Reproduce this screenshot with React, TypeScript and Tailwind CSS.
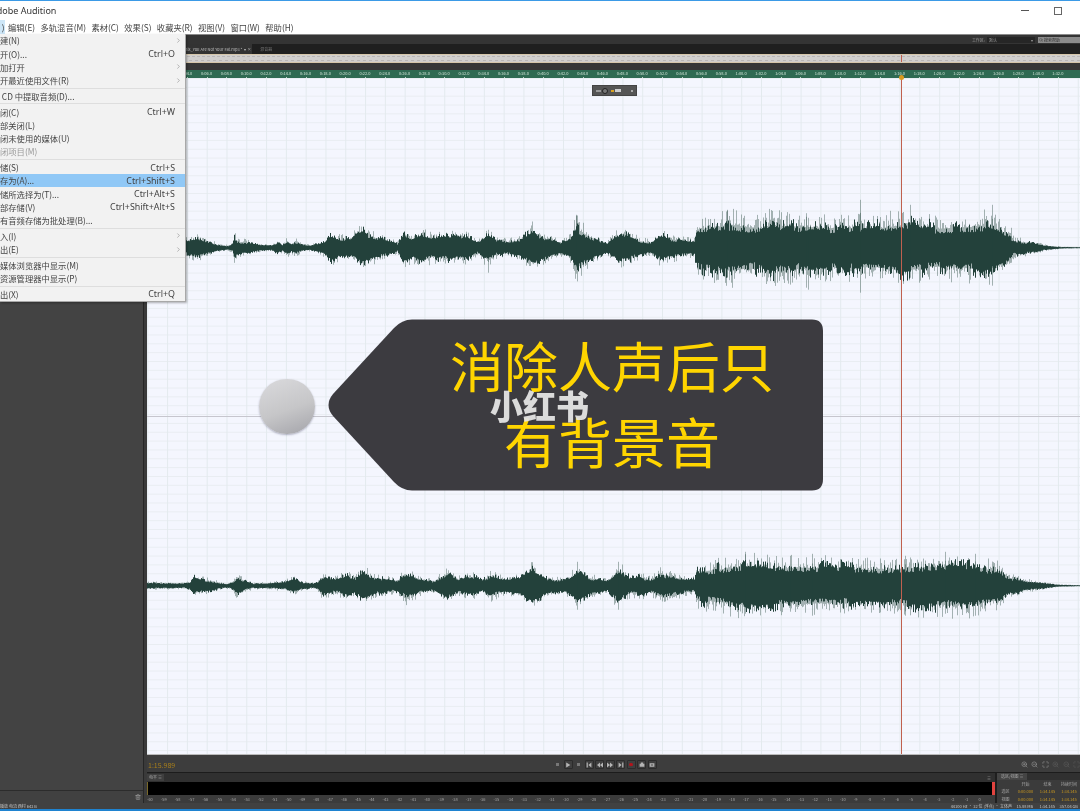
import React from "react";
import { ChevronRight, Trash2, ZoomIn, ZoomOut, Maximize, Search } from "lucide-react";

type P = [number, number];

const top: P[] = [[147,6],[165,9],[186,9],[197,13],[205,9],[217,4],[227,2.5],[232,4],[234,13],[238,8],[246,7],[260,3.5],[272,3],[277,7],[282,4],[287,9],[291,5],[295,8],[302,4],[310,3],[317,5],[325,8],[330,16],[338,11],[350,11],[362,20],[373,14],[385,10],[397,5],[403,19],[412,12],[420,17],[432,13],[447,15],[458,13],[467,15],[477,6],[488,18],[496,9],[507,8],[520,10],[533,22],[545,13],[560,7],[570,12],[576,28],[587,17],[600,9],[607,6],[617,16],[628,16],[640,9],[650,7],[660,15],[680,10],[694,8],[697,26],[715,29],[730,33],[760,27],[770,32],[800,30],[830,28],[860,28],[880,28],[905,33],[930,27],[960,28],[985,32],[1000,25],[1008,18],[1012,10],[1027,7],[1047,2.5],[1060,1],[1080,.5]];
const bottom: P[] = [[148,3.5],[170,3.5],[183,2.5],[190,4],[193,11],[200,8],[212,6],[220,3.5],[228,2.5],[232,5],[237,12],[245,6],[253,3],[273,3.5],[285,5],[293,9],[303,4],[313,3],[318,5],[320,11],[335,9],[347,12],[355,9],[362,17],[375,10],[397,7],[405,16],[420,9],[433,6],[447,17],[458,9],[473,12],[482,7],[490,14],[503,8],[520,10],[532,20],[545,10],[560,7],[570,10],[577,20],[590,10],[607,6],[618,21],[630,10],[640,12],[650,8],[660,16],[680,10],[694,8],[697,20],[720,23],[745,28],[775,24],[800,26],[840,24],[880,22],[910,25],[945,27],[975,26],[1000,20],[1010,10],[1027,6],[1047,2.5],[1060,1],[1080,.5]];

function env(pts: P[], x: number) {
  for (let i = 1; i < pts.length; i++) {
    if (x <= pts[i][0]) {
      const [x0, y0] = pts[i - 1];
      const [x1, y1] = pts[i];
      return y0 + ((y1 - y0) * (x - x0)) / (x1 - x0);
    }
  }
  return 0.5;
}

function rng(seed: number) {
  let s = seed;
  return () => {
    s = (s * 1664525 + 1013904223) >>> 0;
    return s / 4294967296;
  };
}

function wave(pts: P[], center: number, seed: number, spikes: [number, number, number][]) {
  const r = rng(seed);
  let body = "";
  let tips = "";
  let slowU = 0.75;
  let slowD = 0.75;
  for (let x = 147; x < 1080; x += 1) {
    const a = env(pts, x);
    if (r() < 0.15) slowU = 0.6 + 0.3 * r();
    if (r() < 0.15) slowD = 0.6 + 0.3 * r();
    const ru = r();
    const rd = r();
    const u = a * slowU * (0.85 + 0.4 * ru * ru);
    const d = a * slowD * (0.85 + 0.4 * rd * rd);
    const px = (x - 147 + 0.5).toFixed(1);
    body += `M${px} ${(center - u).toFixed(1)}V${(center + d).toFixed(1)}`;
    const k1 = r();
    const k2 = r();
    const tu = a * (0.7 + 0.55 * k1 * k1 * k1);
    const td = a * (0.7 + 0.55 * k2 * k2 * k2);
    tips += `M${px} ${(center - tu).toFixed(1)}V${(center + td).toFixed(1)}`;
  }
  for (const [x, up, dn] of spikes) {
    tips += `M${x - 147 + 0.5} ${center - up}V${center + dn}`;
  }
  return { body, tips };
}

const w1 = wave(top, 170, 11, [[860,48,45],[910,43,30],[992,43,38],[806,31,40],[808,30,42],[727,38,30],[1011,20,15],[576,32,26],[488,18,25]]);
const w2 = wave(bottom, 169, 29, [[745,34,28],[790,30,26],[812,32,30],[905,30,30],[945,34,28],[975,32,30],[618,24,24],[577,24,24]]);

function Channel({ w }: { w: { body: string; tips: string } }) {
  return (
    <div className="flex-1 min-h-0">
      <svg className="block w-full h-full" viewBox="0 0 933 338" preserveAspectRatio="none">
        <path d={w.tips} stroke="#2a4a42" strokeWidth="0.8" strokeOpacity="0.5" fill="none" />
        <path d={w.body} stroke="#22403a" strokeWidth="1" fill="none" />
      </svg>
    </div>
  );
}

const cjk = "font-['Noto_Sans_CJK_SC','Noto_Sans',sans-serif]";

type Row = { t?: string; k?: string; sub?: boolean; dim?: boolean; hi?: boolean; sep?: boolean };
const rows: Row[] = [
  { t: "新建(N)", sub: true },
  { t: "打开(O)...", k: "Ctrl+O" },
  { t: "追加打开", sub: true },
  { t: "打开最近使用文件(R)", sub: true },
  { sep: true },
  { t: "从 CD 中提取音频(D)..." },
  { sep: true },
  { t: "关闭(C)", k: "Ctrl+W" },
  { t: "全部关闭(L)" },
  { t: "关闭未使用的媒体(U)" },
  { t: "关闭项目(M)", dim: true },
  { sep: true },
  { t: "存储(S)", k: "Ctrl+S" },
  { t: "另存为(A)...", k: "Ctrl+Shift+S", hi: true },
  { t: "存储所选择为(T)...", k: "Ctrl+Alt+S" },
  { t: "全部存储(V)", k: "Ctrl+Shift+Alt+S" },
  { t: "所有音频存储为批处理(B)..." },
  { sep: true },
  { t: "导入(I)", sub: true },
  { t: "导出(E)", sub: true },
  { sep: true },
  { t: "在媒体浏览器中显示(M)" },
  { t: "在资源管理器中显示(P)" },
  { sep: true },
  { t: "退出(X)", k: "Ctrl+Q" },
];

const menus = ["编辑(E)", "多轨混音(M)", "素材(C)", "效果(S)", "收藏夹(R)", "视图(V)", "窗口(W)", "帮助(H)"];

function fmt(t: number) {
  const m = Math.floor(t / 60);
  const s = t % 60;
  return `${m}:${s < 10 ? "0" : ""}${s}.0`;
}
const ticks = Array.from({ length: 46 }, (_, i) => (i + 1) * 2);
const dbs = Array.from({ length: 61 }, (_, i) => i - 60);

function Btn({ children }: { children: React.ReactNode }) {
  return <div className="w-[9px] h-[9px] rounded-[1px] bg-[#3f3f3f] border border-[#2c2c2c] flex items-center justify-center">{children}</div>;
}
function Glyph({ d }: { d: string }) {
  return (
    <svg width="6" height="6" viewBox="0 0 10 10" fill="#b5b5b5">
      <path d={d} />
    </svg>
  );
}

export default function App() {
  return (
    <div className={`relative w-[1080px] h-[811px] overflow-hidden bg-[#2a2a2a] flex flex-col blur-[0.4px] ${cjk}`}>
      {/* title bar */}
      <div className="h-[1px] bg-[#3b9ae6] shrink-0" />
      <div className="h-[19px] bg-white shrink-0 flex items-center justify-between">
        <span className="-ml-[9px] text-[9px] text-[#333] font-['Noto_Sans',sans-serif]">Adobe Audition</span>
        <div className="flex items-center">
          <div className="w-[8px] h-[1px] bg-[#555] mr-[25px]" />
          <div className="w-[8px] h-[8px] border border-[#666] mr-[18px]" />
        </div>
      </div>
      {/* menu bar */}
      <div className="h-[14px] bg-white shrink-0 flex items-center text-[8.3px] text-[#444] whitespace-nowrap">
        <span className="h-full w-[4.5px] bg-[#cde6f7] flex items-center justify-end overflow-hidden mr-[3.5px]">)</span>
        <div className="flex gap-[5.4px]">
          {menus.map((m) => (
            <span key={m}>{m}</span>
          ))}
        </div>
      </div>
      {/* workspace bar */}
      <div className="h-[10px] bg-[#343434] border-t border-[#8a8a8a] shrink-0 flex items-center justify-end text-[4px] text-[#9a9a9a]">
        <span className="mr-[2px]">工作区:</span>
        <div className="w-[48px] h-[6px] bg-[#262626] flex items-center justify-between px-[2px] mr-[3px]">
          <span>默认</span>
          <span>▾</span>
        </div>
        <div className="w-[42px] h-[6px] bg-[#8b8b8b] flex items-center px-[1px] text-[#333] gap-[1px]">
          <Search size={4} />
          <span>搜索帮助</span>
        </div>
      </div>

      <div className="flex-1 min-h-0 flex">
        {/* left panels */}
        <div className="w-[143px] shrink-0 flex flex-col mt-[1px]">
          <div className="h-[10px] bg-[#222]" />
          <div className="flex-1 min-h-0 bg-[#434343] border-b border-[#2c2c2c]" />
          <div className="h-[12px] bg-[#414141] flex items-center justify-end pr-[2px]">
            <Trash2 size={6} className="text-[#aaa]" />
          </div>
        </div>
        <div className="w-[4px] shrink-0 bg-[#3a3a3a] border-l border-[#262626]" />

        {/* editor */}
        <div className="flex-1 min-w-0 flex flex-col">
          {/* tabs */}
          <div className="h-[10px] bg-[#1f1f1f] shrink-0 flex items-center text-[4px] text-[#bdbdbd] whitespace-nowrap overflow-hidden">
            <div className="h-full flex items-center bg-[#333] pl-[18px] pr-[1px] gap-[2px]">
              <span>编辑器: Remix_You Are Not Your Fat.mp3 *</span>
              <span>▾ ×</span>
            </div>
            <span className="ml-[8px] text-[#777]">混音器</span>
          </div>
          {/* overview */}
          <div className="h-[9px] shrink-0 bg-[#d0cecd] border-t border-b border-[#d6c6aa] relative">
            <div className="mt-[1px] h-[1px] bg-[repeating-linear-gradient(to_right,#b9b6b5_0_3px,transparent_3px_5px)]" />
            <div className="mt-[3px] h-[1px] bg-[repeating-linear-gradient(to_right,#b9b6b5_0_3px,transparent_3px_6px)]" />
            <div className="absolute left-[754px] top-0 bottom-0 w-[1px] bg-[#c0604f]" />
          </div>
          <div className="h-[7px] shrink-0 bg-[#363636]" />
          {/* ruler */}
          <div className="h-[8px] shrink-0 bg-[#2f6a52] flex text-[4px] leading-[7px] text-[#cfe3d6] overflow-hidden whitespace-nowrap">
            <div className="flex ml-[10.1px]">
              {ticks.map((t) => (
                <span key={t} className="relative w-[19.8px] shrink-0 text-center">
                  {fmt(t)}
                  <span className="absolute left-[9.9px] bottom-0 w-[1px] h-[1.5px] bg-[#bcd4c6]" />
                </span>
              ))}
            </div>
          </div>
          {/* canvas */}
          <div className="relative flex-1 min-h-0 flex flex-col bg-[#f4f6fe] bg-[linear-gradient(to_right,#e3eaee_1px,transparent_1px),linear-gradient(to_bottom,#e9edf2_1px,transparent_1px)] bg-[size:19.8px_8.85px] bg-[position:0.3px_0px] border-b border-[#bbb]">
            <Channel w={w1} />
            <div className="h-[1px] shrink-0 bg-[#c6c6ce]" />
            <Channel w={w2} />
            {/* playhead */}
            <div className="absolute left-[754px] top-0 bottom-0 w-[1px] bg-[#c0604f]" />
            <div className="absolute left-[752px] -top-[3px] w-[5px] h-[5px] rounded-full bg-[#d99a1e]" />
            {/* HUD */}
            <div className="absolute left-[445px] top-[7px] w-[45px] h-[11px] bg-[#555] border border-[#444] flex items-center justify-between px-[3px] text-[#ccc]">
              <div className="flex items-center gap-[1px]">
                <div className="w-[5px] h-[2px] bg-[#999]" />
                <div className="w-[6px] h-[6px] rounded-full border border-[#222] bg-[#777]" />
                <div className="w-[3px] h-[2px] bg-[#d9a21e] ml-[2px]" />
                <div className="w-[6px] h-[3px] bg-[#ccc]" />
              </div>
              <div className="w-[2px] h-[2px] bg-[#aaa]" />
            </div>
          </div>
          {/* transport */}
          <div className="h-[17px] shrink-0 bg-[#3d3d3d] flex items-center relative">
            <span className="ml-[1px] mt-[4px] text-[7px] text-[#a87f1a]">1:15.989</span>
            <div className="absolute left-[406px] top-[5px] flex items-center gap-[1.5px]">
              <div className="w-[9px] h-[9px] flex items-center justify-center"><div className="w-[3px] h-[3px] bg-[#777]" /></div>
              <Btn><Glyph d="M2 1 L9 5 L2 9 Z" /></Btn>
              <div className="w-[9px] h-[9px] flex items-center justify-center"><div className="w-[3px] h-[3px] bg-[#777]" /></div>
              <Btn><Glyph d="M1 1H3V9H1ZM9 1V9L4 5Z" /></Btn>
              <Btn><Glyph d="M5 1V9L0 5ZM10 1V9L5 5Z" /></Btn>
              <Btn><Glyph d="M0 1L5 5L0 9ZM5 1L10 5L5 9Z" /></Btn>
              <Btn><Glyph d="M1 1L6 5L1 9ZM7 1H9V9H7Z" /></Btn>
              <Btn><div className="w-[3.5px] h-[3.5px] rounded-full bg-[#b3141c]" /></Btn>
              <Btn><Glyph d="M1 3H9V8H1ZM3 1H7V3H3Z" /></Btn>
              <Btn><Glyph d="M1 2H9V8H1ZM3 4V6H7V4Z" /></Btn>
            </div>
            <div className="absolute right-[0px] top-[6px] flex gap-[3.5px] text-[#9a9a9a]">
              <ZoomIn size={7} />
              <ZoomOut size={7} />
              <Maximize size={7} />
              <ZoomIn size={7} className="text-[#5c5c5c]" />
              <ZoomOut size={7} className="text-[#5c5c5c]" />
              <Maximize size={7} className="text-[#5c5c5c]" />
            </div>
          </div>
          <div className="h-[1px] shrink-0 bg-[#1c1c1c]" />
          {/* levels + selection */}
          <div className="h-[30px] shrink-0 flex">
            <div className="flex-1 min-w-0 flex flex-col bg-[#3b3b3b]">
              <div className="h-[9px] bg-[#303030] flex items-center justify-between text-[4px] text-[#aaa]">
                <span className="px-[2px] h-[7px] bg-[#3f3f3f] leading-[7px]">电平 ≡</span>
                <span className="mr-[4px]">≡</span>
              </div>
              <div className="h-[13px] bg-black flex justify-end border-l border-[#7b6a2a]">
                <div className="w-[3px] bg-[#e2433f]" />
              </div>
              <div className="flex-1 flex text-[4px] leading-[8px] text-[#a5a5a5] overflow-hidden whitespace-nowrap">
                <div className="flex">
                  {dbs.map((d) => (
                    <span key={d} className="w-[13.87px] shrink-0">{d}</span>
                  ))}
                </div>
              </div>
            </div>
            <div className="w-[2px] shrink-0 bg-[#1f1f1f]" />
            <div className="w-[83px] shrink-0 bg-[#3b3b3b] flex flex-col text-[4px] text-[#a5a5a5]">
              <div className="h-[7px] bg-[#303030] flex">
                <span className="px-[4px] bg-[#444] leading-[7px]">选区/视图 ≡</span>
              </div>
              <div className="grid grid-cols-[17px_23px_21px_22px] grid-rows-3 flex-1 items-center text-center">
                <span />
                <span>开始</span>
                <span>结束</span>
                <span>持续时间</span>
                <span>选区</span>
                <span className="text-[#c9971f]">0:00.000</span>
                <span className="text-[#c9971f]">1:34.145</span>
                <span className="text-[#c9971f]">1:34.145</span>
                <span>视图</span>
                <span className="text-[#c9971f]">0:00.000</span>
                <span className="text-[#c9971f]">1:34.145</span>
                <span className="text-[#c9971f]">1:34.145</span>
              </div>
            </div>
          </div>
        </div>
      </div>

      {/* status */}
      <div className="h-[6px] shrink-0 bg-[#414141] flex items-center justify-between text-[4px] text-[#c8c8c8] whitespace-nowrap">
        <span>播放 电流 西村 642 B</span>
        <span className="mr-[2px]">44100 Hz • 32 位 (浮点) • 立体声 &nbsp;&nbsp;&nbsp; 15.88 MB &nbsp;&nbsp;&nbsp;&nbsp;&nbsp; 1:34.145 &nbsp;&nbsp;&nbsp; 357.04 GB</span>
      </div>
      <div className="h-[2px] shrink-0 bg-[#1f83d0]" />

      {/* File menu */}
      <div className="absolute left-0 top-[34px] w-[186px] h-[268px] bg-[#f2f2f2] border-r border-b border-[#a8a8a8] shadow-[1px_1px_2px_rgba(0,0,0,0.3)] text-[8.3px] text-[#444] whitespace-nowrap overflow-hidden">
        {rows.map((r, i) =>
          r.sep ? (
            <div key={i} className="h-[1px] my-[0.85px] bg-[#dedede]" />
          ) : (
            <div key={i} className={`relative h-[13.2px] flex items-center justify-between pr-[10px] ${r.hi ? "bg-[#90c8f6]" : ""} ${r.dim ? "text-[#999]" : ""}`}>
              <span className="-ml-[8.3px]">{r.t}</span>
              {r.k && <span className="font-['Noto_Sans',sans-serif] text-[8.9px]">{r.k}</span>}
              {r.sub && <ChevronRight size={7} className="absolute right-[3px] text-[#888]" />}
            </div>
          )
        )}
      </div>

      {/* Sticker overlay */}
      <div className="absolute left-[259px] top-[379px] w-[56px] h-[55px] rounded-full bg-[linear-gradient(160deg,#dadadd,#c6c6c8_55%,#a3a3a9)] shadow-[0_1px_2px_rgba(90,90,120,0.45)]" />
      <svg className="absolute left-[320px] top-[312px]" width="510" height="186" viewBox="320 312 510 186">
        <path d="M412 319.5H812Q823 319.5 823 331V479Q823 490.5 812 490.5H412Q402 490.5 394 482L333 416Q324 405 333 394L394 328Q402 319.5 412 319.5Z" fill="#3c3b40" />
      </svg>
      <div className="absolute left-[328px] top-[327px] w-[495px] flex flex-col items-center pl-[73px] text-[54px] leading-[76px] text-[#ffd500]">
        <span>消除人声后只</span>
        <span>有背景音</span>
      </div>
      <div className="absolute left-[490px] top-[384px] text-[33px] leading-[42px] font-black text-[#e4e4e4] opacity-95">小红书</div>
    </div>
  );
}
